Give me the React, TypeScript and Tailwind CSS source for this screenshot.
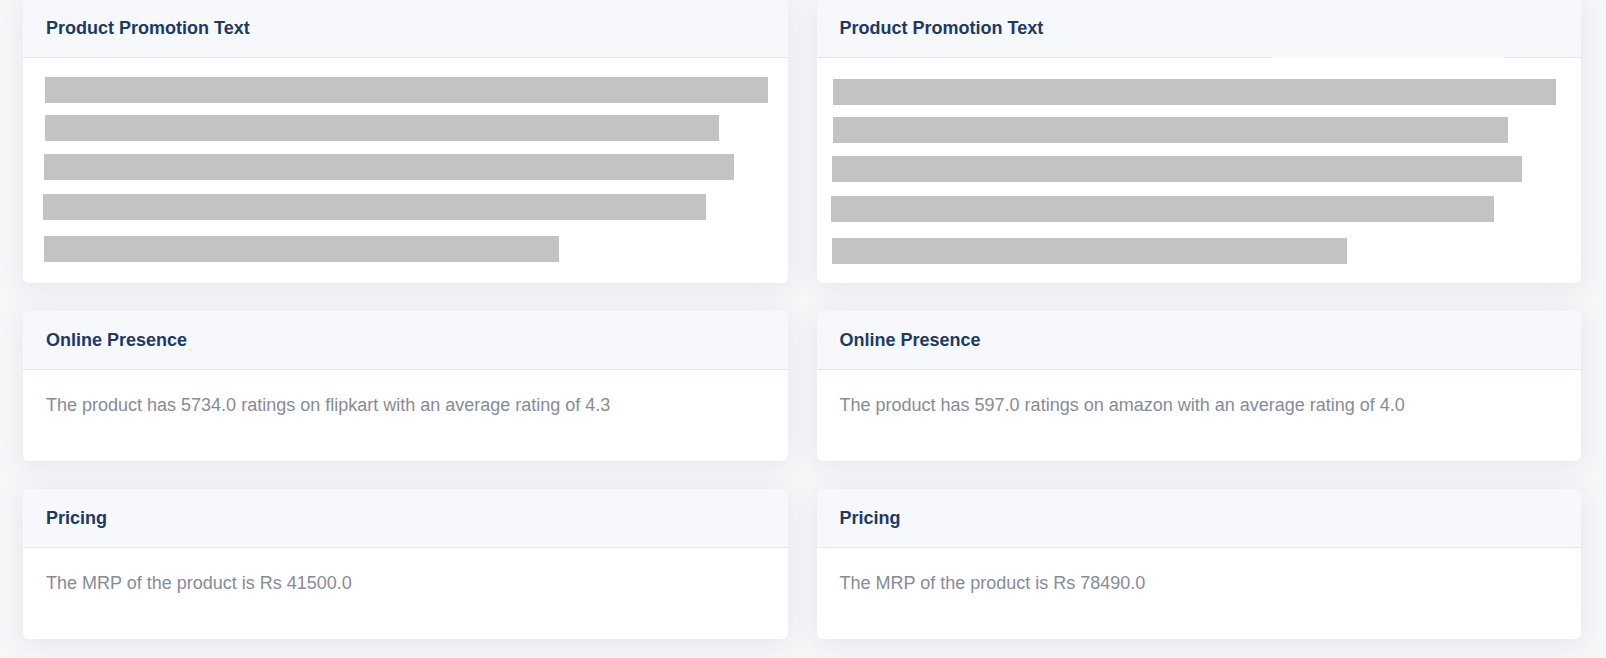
import React from "react";

type Bar = { left: number; width: number; top: number };

const leftBars: Bar[] = [
  { left: 22, width: 723, top: 19 },
  { left: 22, width: 674, top: 12 },
  { left: 21, width: 690, top: 13 },
  { left: 20, width: 663, top: 14 },
  { left: 21, width: 515, top: 16 },
];

const rightBars: Bar[] = [
  { left: 16, width: 723, top: 21 },
  { left: 16, width: 675, top: 12 },
  { left: 15, width: 690, top: 13 },
  { left: 14, width: 663, top: 14 },
  { left: 15, width: 515, top: 16 },
];

function CardHeader({ title, gap }: { title: string; gap?: boolean }) {
  return (
    <div className="relative flex h-[59px] items-center border-b border-[#e4e6ee] bg-[#f7f8fc] px-[23px]">
      <h3 className="text-[18px] font-bold leading-[22px] text-[#1c3a66]">{title}</h3>
      {gap && <span className="absolute bottom-[-1px] left-[455px] h-px w-[233px] bg-white" />}
    </div>
  );
}

function Card({ children, className }: { children: React.ReactNode; className?: string }) {
  return (
    <div
      className={
        "overflow-hidden rounded-[6px] bg-white shadow-[0_4px_28px_rgba(40,44,80,0.09)] " + (className ?? "")
      }
    >
      {children}
    </div>
  );
}

function PromoCard({ bars, gap }: { bars: Bar[]; gap?: boolean }) {
  return (
    <Card className="-mt-px">
      <CardHeader title="Product Promotion Text" gap={gap} />
      <div className="pb-[19px]">
        {bars.map((b, i) => (
          <div
            key={i}
            className="h-[26px] bg-[#c3c3c3]"
            style={{ marginLeft: b.left, width: b.width, marginTop: b.top }}
          />
        ))}
      </div>
    </Card>
  );
}

function TextCard({ title, text }: { title: string; text: string }) {
  return (
    <Card>
      <CardHeader title={title} />
      <p className="px-[23px] pb-[42px] pt-[22px] text-[18px] leading-[27px] text-[#878b98]">{text}</p>
    </Card>
  );
}

export default function App() {
  return (
    <div
      className="min-h-screen bg-[#f7f7fa] pl-[23px] pr-[25px]"
      style={{ fontFamily: '"Liberation Sans", Arial, sans-serif' }}
    >
      <div className="grid grid-cols-2 gap-x-[29px] gap-y-[28px]">
        <PromoCard bars={leftBars} />
        <PromoCard bars={rightBars} gap />
        <TextCard
          title="Online Presence"
          text="The product has 5734.0 ratings on flipkart with an average rating of 4.3"
        />
        <TextCard
          title="Online Presence"
          text="The product has 597.0 ratings on amazon with an average rating of 4.0"
        />
        <TextCard title="Pricing" text="The MRP of the product is Rs 41500.0" />
        <TextCard title="Pricing" text="The MRP of the product is Rs 78490.0" />
      </div>
    </div>
  );
}
